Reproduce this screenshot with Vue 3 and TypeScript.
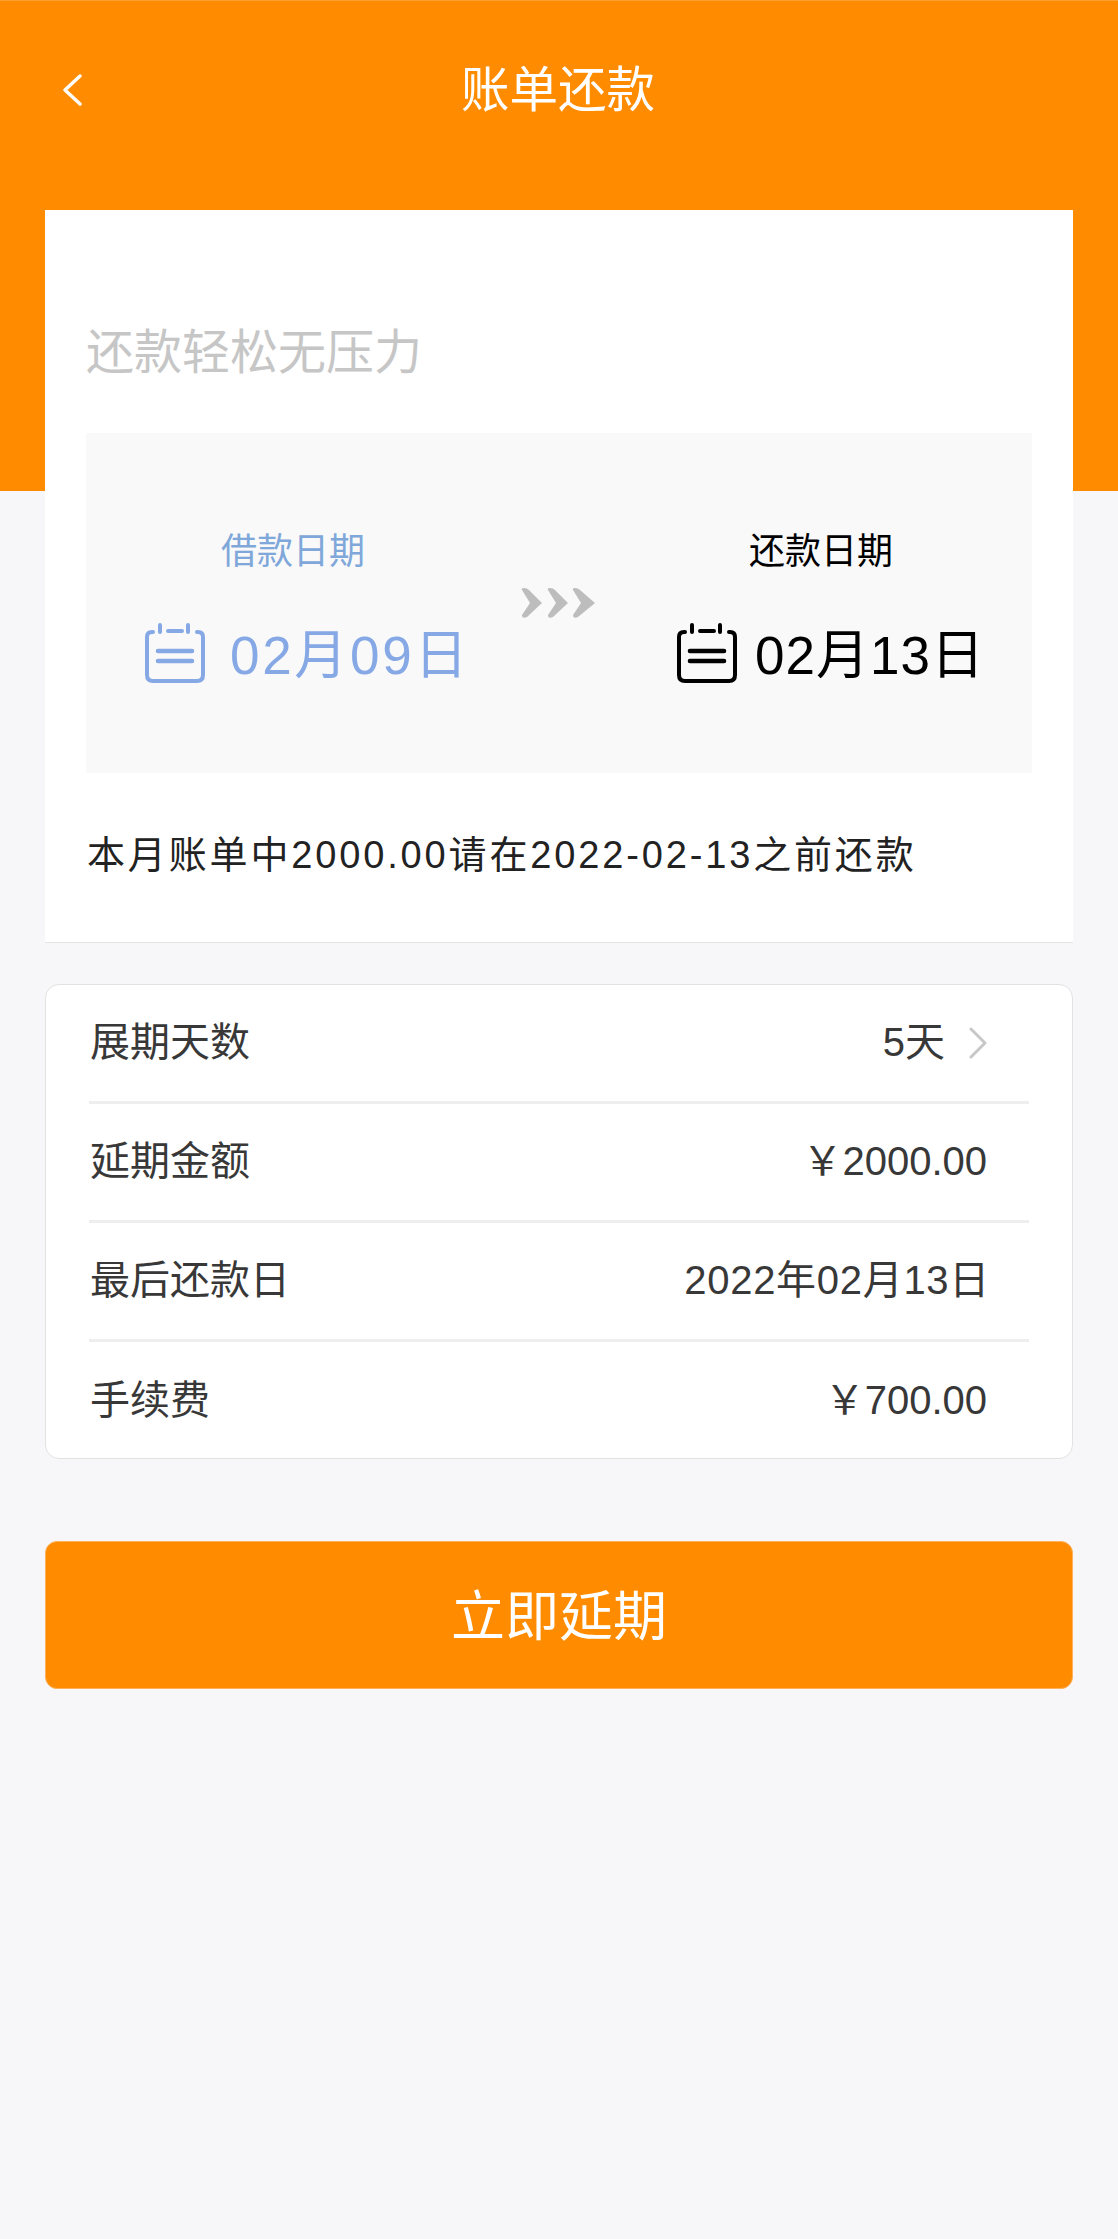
<script setup lang="ts">
interface InfoRow {
  label: string
  value: string
  link?: boolean
  wide?: boolean
}

const rows: InfoRow[] = [
  { label: '展期天数', value: '5天', link: true },
  { label: '延期金额', value: '￥2000.00' },
  { label: '最后还款日', value: '2022年02月13日', wide: true },
  { label: '手续费', value: '￥700.00' }
]
</script>

<template>
  <div class="page">
    <header class="header">
      <svg class="back" viewBox="0 0 20 32" fill="none">
        <path d="M18 2 L3 16 L18 30" stroke="#fff" stroke-width="3.4" stroke-linecap="round" stroke-linejoin="round" />
      </svg>
      <h1 class="title">账单还款</h1>
    </header>

    <section class="card">
      <h2 class="slogan">还款轻松无压力</h2>
      <div class="dates">
        <div class="date-col borrow">
          <div class="date-label">借款日期</div>
          <div class="date-value">
            <svg class="calendar" viewBox="0 0 60 60" fill="none" stroke="currentColor" stroke-width="4" stroke-linecap="round">
              <path d="M8 9 H7 Q2 9 2 14 V52 Q2 58 8 58 H52 Q58 58 58 52 V14 Q58 9 53 9 H52" />
              <path d="M15 2 V9 M43 2 V9 M23 8 H37" />
              <path d="M13 28 H47 M13 38 H47" stroke-width="4.6" />
            </svg>
            <span class="date-text">02月09日</span>
          </div>
        </div>
        <svg class="arrows" viewBox="0 0 74 30" fill="#bdbdbd">
          <path d="M1 2 Q0 0 3 0 Q6 0 8 2 L21 15 L6 29 Q1 31 1 27 L9 15 Z" />
          <path d="M27 2 Q26 0 29 0 Q32 0 34 2 L47 15 L32 29 Q27 31 27 27 L35 15 Z" />
          <path d="M52 2 Q51 0 54 0 Q57 0 59 2 L74 15 L57 29 Q52 31 52 27 L60 15 Z" />
        </svg>
        <div class="date-col repay">
          <div class="date-label">还款日期</div>
          <div class="date-value">
            <svg class="calendar" viewBox="0 0 60 60" fill="none" stroke="currentColor" stroke-width="4" stroke-linecap="round">
              <path d="M8 9 H7 Q2 9 2 14 V52 Q2 58 8 58 H52 Q58 58 58 52 V14 Q58 9 53 9 H52" />
              <path d="M15 2 V9 M43 2 V9 M23 8 H37" />
              <path d="M13 28 H47 M13 38 H47" stroke-width="4.6" />
            </svg>
            <span class="date-text">02月13日</span>
          </div>
        </div>
      </div>
      <p class="note">本月账单中2000.00请在2022-02-13之前还款</p>
    </section>

    <section class="info">
      <div v-for="row in rows" :key="row.label" class="row">
        <span class="row-label">{{ row.label }}</span>
        <span class="row-value" :class="{ wide: row.wide }">
          {{ row.value }}
          <svg v-if="row.link" class="chevron" viewBox="0 0 18 32" fill="none">
            <path d="M2 2 L16 16 L2 30" stroke="#c8c8c8" stroke-width="3" stroke-linecap="round" stroke-linejoin="round" />
          </svg>
        </span>
      </div>
    </section>

    <button class="submit" type="button">立即延期</button>
  </div>
</template>

<style>
html,
body {
  margin: 0;
  background: #f7f7f9;
}
</style>

<style scoped>
.page {
  width: 1118px;
  min-height: 2239px;
  background: #f7f7f9;
  font-family: "Liberation Sans", "Noto Sans CJK SC", sans-serif;
  overflow: hidden;
}

.header {
  height: 491px;
  background: #ff8c00;
  border-top: 1px solid #ffa02e;
  display: flex;
  justify-content: center;
  padding-top: 59px;
  padding-right: 2px;
  box-sizing: border-box;
  position: relative;
}

.back {
  position: absolute;
  left: 62px;
  top: 73px;
  width: 20px;
  height: 32px;
}

.title {
  margin: 0;
  font-size: 48.5px;
  line-height: 60px;
  font-weight: 400;
  color: #fff;
}

.card {
  margin: -281px 45px 0;
  padding: 113px 41px 57px;
  background: #fff;
  border-bottom: 1px solid #e4e4e4;
  position: relative;
}

.slogan {
  margin: 0 0 50px;
  font-size: 48px;
  line-height: 60px;
  font-weight: 400;
  color: #c6c6c6;
}

.dates {
  display: flex;
  align-items: flex-start;
  height: 340px;
  background: #f9f9f9;
}

.date-col {
  padding-top: 94px;
}

.borrow {
  width: 435px;
  padding-left: 59px;
  box-sizing: border-box;
  color: #86a9e6;
}

.borrow .date-label {
  margin-left: 76px;
  color: #7fa7d9;
}

.repay {
  margin-left: 82px;
  color: #000;
}

.repay .date-label {
  margin-left: 72px;
}

.date-label {
  font-size: 36px;
  line-height: 50px;
}

.date-value {
  display: flex;
  align-items: center;
  margin-top: 46px;
  height: 60px;
}

.calendar {
  width: 60px;
  height: 60px;
  flex: none;
}

.date-text {
  font-size: 53px;
  line-height: 60px;
  letter-spacing: 2.7px;
  margin-left: 25px;
  padding-top: 5px;
  white-space: nowrap;
}

.repay .date-text {
  margin-left: 18px;
  letter-spacing: 1px;
}

.arrows {
  width: 74px;
  height: 30px;
  margin-top: 155px;
  flex: none;
}

.note {
  margin: 52px 0 0;
  padding-left: 1px;
  font-size: 38px;
  line-height: 60px;
  letter-spacing: 2.85px;
  color: #222;
  white-space: nowrap;
}

.info {
  margin: 41px 45px 0;
  padding: 0 43px;
  background: #fff;
  border: 1px solid #e2e2e2;
  border-radius: 14px;
}

.row {
  height: 119px;
  box-sizing: border-box;
  display: flex;
  align-items: center;
  justify-content: space-between;
  border-bottom: 3px solid #eeeeee;
  padding: 0 42px 8px 1px;
  font-size: 40px;
  color: #383838;
}

.row:last-child {
  height: 116px;
  border-bottom: none;
  padding-bottom: 7px;
}

.row-value {
  display: flex;
  align-items: center;
  white-space: nowrap;
  position: relative;
}

.row-value.wide {
  letter-spacing: 0.7px;
  margin-right: -3px;
}

.chevron {
  width: 18px;
  height: 32px;
  margin: 8px 0 0 24px;
  flex: none;
}

.submit {
  display: block;
  width: 1028px;
  height: 148px;
  margin: 82px 45px 0;
  padding: 0 0 6px;
  border: 1px solid #ffb05a;
  border-radius: 12px;
  background: #ff8c00;
  color: #fff;
  font-family: inherit;
  font-size: 54px;
}
</style>
